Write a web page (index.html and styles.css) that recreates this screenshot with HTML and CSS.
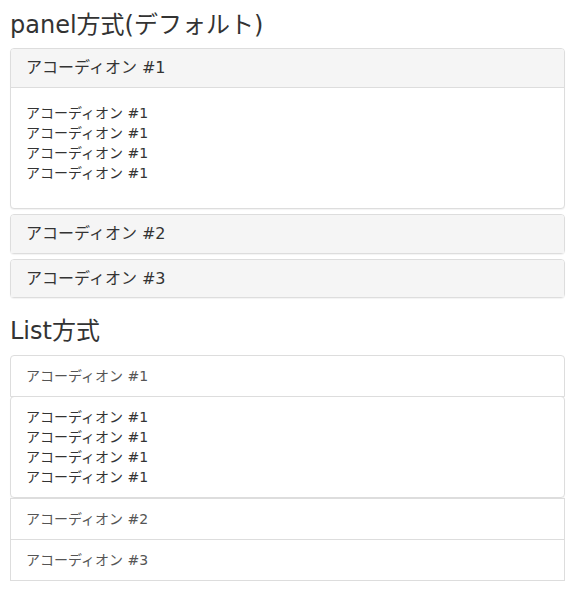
FILE: index.html
```html
<!DOCTYPE html>
<html>
<head>
    <meta charset="utf-8">
    <title>Accordion</title>
    <link rel="stylesheet" href="styles.css">
</head>
<body>
    <h3>panel方式(デフォルト)</h3>
    <div class="panel-group">
        <div class="panel">
            <div class="panel-heading">
                <h4 class="panel-title">アコーディオン #1</h4>
            </div>
            <div class="panel-body">
                <p>アコーディオン #1<br>アコーディオン #1<br>アコーディオン #1<br>アコーディオン #1</p>
            </div>
        </div>
        <div class="panel">
            <div class="panel-heading">
                <h4 class="panel-title">アコーディオン #2</h4>
            </div>
        </div>
        <div class="panel">
            <div class="panel-heading">
                <h4 class="panel-title">アコーディオン #3</h4>
            </div>
        </div>
    </div>

    <h3>List方式</h3>
    <div class="list-group">
        <a class="list-group-item first">アコーディオン #1</a>
        <div class="list-group-body">
            アコーディオン #1<br>アコーディオン #1<br>アコーディオン #1<br>アコーディオン #1
        </div>
        <a class="list-group-item">アコーディオン #2</a>
        <a class="list-group-item">アコーディオン #3</a>
    </div>
</body>
</html>
```

FILE: styles.css
```css
body {
    margin: 0;
    padding: 12px 9px 10px 10px;
    font-family: "DejaVu Sans", "Noto Sans CJK JP", sans-serif;
    font-size: 14px;
    line-height: 20px;
    color: #333;
    background: #fff;
}
h3 {
    font-size: 24px;
    font-weight: 400;
    line-height: 26.4px;
    margin: 0 0 10px;
}
.panel-group {
    margin-bottom: 20px;
}
.panel {
    background: #fff;
    border: 1px solid #ddd;
    border-radius: 4px;
    box-shadow: 0 1px 1px rgba(0, 0, 0, .05);
    margin-bottom: 5px;
}
.panel:last-child {
    margin-bottom: 0;
}
.panel-heading {
    background-color: #f5f5f5;
    padding: 10px 15px;
    border-radius: 3px 3px 0 0;
}
.panel-title {
    margin: 0;
    font-size: 16px;
    font-weight: 400;
    line-height: 17.6px;
}
.panel-body {
    border-top: 1px solid #ddd;
    padding: 15px;
}
.panel-body p {
    margin: 0 0 10px;
}
.list-group {
    margin-bottom: 20px;
}
.list-group-item {
    display: block;
    padding: 10px 15px;
    color: #555;
    background: #fff;
    border: 1px solid #ddd;
    margin-bottom: -1px;
}
.list-group-item.first {
    border-radius: 4px 4px 0 0;
}
.list-group-body {
    padding: 10px 15px;
    border: 1px solid #ddd;
    border-radius: 4px;
    box-shadow: 0 1px 1px rgba(0, 0, 0, .05);
}
```
